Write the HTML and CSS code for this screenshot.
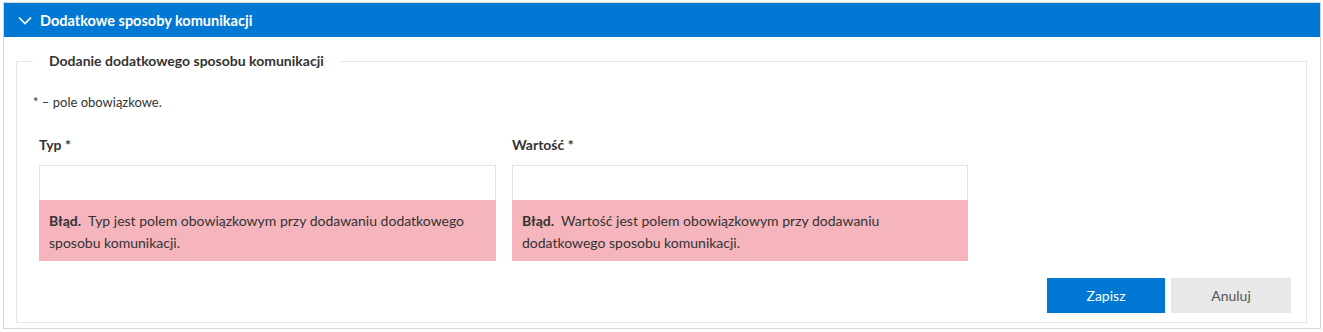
FILE: index.html
```html
<!DOCTYPE html>
<html lang="pl">
<head>
  <meta charset="UTF-8" />
  <title>Dodatkowe sposoby komunikacji</title>
  <link rel="stylesheet" href="styles.css">
</head>
<body>
  <div class="panel">
    <div class="panel-heading">
      <svg class="chevron" width="14" height="9" viewBox="0 0 14 9"><path d="M1 1.5 L7 7.5 L13 1.5" fill="none" stroke="#fff" stroke-width="1.6"/></svg>
      <span>Dodatkowe sposoby komunikacji</span>
    </div>
    <div class="panel-body">
      <fieldset class="form-box">
        <legend>Dodanie dodatkowego sposobu komunikacji</legend>
        <p class="note">* – pole obowiązkowe.</p>

        <div class="fields">
          <div class="field">
            <label for="typ">Typ *</label>
            <input id="typ" type="text">
            <div class="error"><strong>Błąd.</strong>Typ jest polem obowiązkowym przy dodawaniu dodatkowego sposobu komunikacji.</div>
          </div>
          <div class="field">
            <label for="wartosc">Wartość *</label>
            <input id="wartosc" type="text">
            <div class="error"><strong>Błąd.</strong>Wartość jest polem obowiązkowym przy dodawaniu dodatkowego sposobu komunikacji.</div>
          </div>
        </div>

        <div class="actions">
          <button class="btn btn-primary">Zapisz</button>
          <button class="btn btn-default">Anuluj</button>
        </div>
      </fieldset>
    </div>
  </div>
</body>
</html>
```

FILE: styles.css
```css
body {
  margin: 0;
  padding: 2px 2px 0 3px;
  font-family: Lato, "Open Sans", sans-serif;
  font-size: 14px;
  color: #333;
  background: #fff;
}

.panel {
  border: 1px solid #d6d6d6;
}

.panel-heading {
  display: flex;
  align-items: center;
  gap: 8px;
  height: 34px;
  padding-left: 14px;
  background: #0078d4;
  color: #fff;
  font-weight: 700;
  font-size: 14.5px;
}

.panel-body {
  padding: 13px 13px 5px 12px;
}

.form-box {
  margin: 0;
  min-width: 0;
  border: 1px solid #e6e6e6;
  padding: 0 15px 9px 16px;
}

.form-box legend {
  padding: 0 16px;
  font-weight: 700;
  font-size: 14px;
  line-height: 22px;
}

.note {
  margin: 20px 0 0;
  line-height: 20px;
  font-size: 13px;
}

.fields {
  display: grid;
  grid-template-columns: 457px 456px;
  gap: 16px;
  margin: 23px 0 0 6px;
}

.field label {
  display: block;
  font-weight: 700;
  line-height: 20px;
  margin-bottom: 10px;
}

.field input {
  display: block;
  box-sizing: border-box;
  width: 100%;
  height: 35px;
  margin: 0;
  border: 1px solid #e2e2e2;
  border-bottom: none;
  background: #fff;
}

.error {
  background: #f6b5bc;
  padding: 10px 10px 7px;
  line-height: 22px;
  font-size: 14px;
}

.error strong {
  margin-right: 7px;
}

.actions {
  display: flex;
  justify-content: flex-end;
  gap: 6px;
  margin-top: 17px;
}

.btn {
  height: 35px;
  border: none;
  font-family: inherit;
  font-size: 14px;
}

.btn-primary {
  width: 118px;
  background: #0078d4;
  color: #fff;
}

.btn-default {
  width: 120px;
  background: #e8e8e8;
  color: #555;
}
```
